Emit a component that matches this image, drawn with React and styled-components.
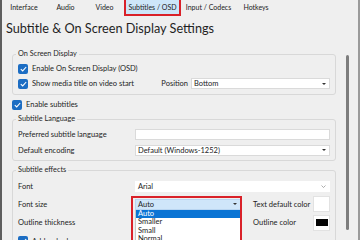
import React from "react";
import styled, { createGlobalStyle } from "styled-components";

const GlobalStyle = createGlobalStyle`
  html, body {
    margin: 0;
    padding: 0;
    width: 360px;
    height: 240px;
    overflow: hidden;
    background: #efefef;
  }
  body {
    font-family: Lato, "Noto Sans", sans-serif;
    color: #1d1d1d;
  }
`;

const Window = styled.div`
  width: 360px;
  height: 240px;
  box-sizing: border-box;
  border-left: 2px solid #5e5e5e;
  border-right: 2px solid #9a9a9a;
  background: #efefef;
  display: flex;
  flex-direction: column;
  overflow: hidden;
`;

const TabBar = styled.div`
  display: flex;
  height: 16px;
  flex-shrink: 0;
`;

const Tab = styled.div`
  width: ${(p) => p.$w}px;
  height: 16px;
  box-sizing: border-box;
  display: flex;
  justify-content: center;
  padding-top: 2px;
  font-size: 7px;
  line-height: 10px;
  white-space: nowrap;
  color: #222;
  background: ${(p) => (p.$active ? "#cde6f9" : "transparent")};
  border: ${(p) => (p.$active ? "2px solid #d92129" : "none")};
  border-top: none;
`;

const Title = styled.h1`
  margin: 3px 0 0 4px;
  font-size: 12.7px;
  line-height: 18px;
  font-weight: 400;
  color: #1f1f1f;
  white-space: nowrap;
`;

const Separator = styled.div`
  height: 1px;
  margin: 3px 4px 0 4px;
  background: #cdcdcd;
`;

const Body = styled.div`
  display: flex;
  padding-left: 10px;
  margin-top: 9px;
`;

const Content = styled.div`
  width: 324px;
  display: flex;
  flex-direction: column;
`;

const ScrollTrack = styled.div`
  margin-left: 10px;
  padding-top: 6px;
`;

const ScrollThumb = styled.div`
  width: 3px;
  height: 175px;
  border-radius: 2px;
  background: #7d7d7d;
`;

const Group = styled.fieldset`
  margin: ${(p) => p.$mt || 0}px 0 0 0;
  padding: 2px 5px ${(p) => p.$pb ?? 2}px 5px;
  border: 1px solid #d8d8d8;
  border-radius: 3px;
  min-width: 0;
`;

const Legend = styled.legend`
  margin-left: -2px;
  padding: 0 2px;
  font-size: 7.3px;
  line-height: 10px;
  color: #262626;
`;

const CheckRow = styled.div`
  display: flex;
  align-items: center;
  height: ${(p) => p.$h || 15}px;
  font-size: 7.5px;
  white-space: nowrap;
`;

const CheckBox = styled.span`
  width: 10px;
  height: 10px;
  margin-right: 4px;
  border-radius: 2px;
  background: #1c6dc3;
  display: inline-flex;
  align-items: center;
  justify-content: center;
  flex-shrink: 0;
`;

const SideLabel = styled.span`
  margin-left: auto;
  margin-right: 3px;
`;

const Grid = styled.div`
  display: grid;
  grid-template-columns: ${(p) => p.$cols};
  grid-template-rows: ${(p) => p.$rows};
  align-items: center;
  font-size: 7.5px;
  white-space: nowrap;
`;

const Field = styled.div`
  position: relative;
  height: 11px;
  box-sizing: border-box;
  grid-column: ${(p) => p.$span || "auto"};
  width: ${(p) => (p.$w ? p.$w + "px" : "auto")};
  background: ${(p) => p.$bg || "#fff"};
  border: 1px solid ${(p) => p.$border || "#dadada"};
  display: flex;
  align-items: center;
  justify-content: space-between;
  padding: 0 3px 0 2px;
  font-size: 7.5px;
  color: #1d1d1d;
`;

const Arrow = styled.span`
  width: 0;
  height: 0;
  border-left: 2px solid transparent;
  border-right: 2px solid transparent;
  border-top: 2px solid #333;
`;

const ColorLabel = styled.span`
  padding-left: 12px;
`;

const Swatch = styled.div`
  width: 17px;
  height: 16px;
  box-sizing: border-box;
  background: #fff;
  border: 1px solid #e2e2e2;
  display: flex;
  align-items: center;
  justify-content: center;
`;

const SwatchFill = styled.span`
  width: 12px;
  height: 7px;
  background: #050505;
`;

const ComboWrap = styled.div`
  position: relative;
  width: 106px;
  height: 11px;
`;

const Popup = styled.div`
  position: absolute;
  top: 11px;
  left: 0;
  width: 106px;
  box-sizing: border-box;
  background: #fff;
  border: 1px solid #c8c8c8;
  border-top: none;
  z-index: 2;
`;

const Option = styled.div`
  height: 8.5px;
  line-height: 8.5px;
  padding-left: 2px;
  font-size: 7.5px;
  background: ${(p) => (p.$sel ? "#0a74d4" : "transparent")};
  color: ${(p) => (p.$sel ? "#fff" : "#1d1d1d")};
`;

const Highlight = styled.div`
  position: absolute;
  top: -3px;
  left: -4px;
  width: 111px;
  height: 60px;
  box-sizing: border-box;
  border: 2px solid #d92129;
  z-index: 3;
  pointer-events: none;
`;

function Check() {
  return (
    <CheckBox>
      <svg width="7" height="6" viewBox="0 0 7 6">
        <path d="M0.8 3.1 L2.7 4.9 L6.2 1" fill="none" stroke="#fff" strokeWidth="1.1" />
      </svg>
    </CheckBox>
  );
}

function Chevron() {
  return (
    <svg width="5" height="3" viewBox="0 0 5 3">
      <path d="M0.5 0.5 L2.5 2.5 L4.5 0.5" fill="none" stroke="#8a8a8a" strokeWidth="0.7" />
    </svg>
  );
}

const tabs = [
  { label: "Interface", w: 44 },
  { label: "Audio", w: 39 },
  { label: "Video", w: 39 },
  { label: "Subtitles / OSD", w: 57, active: true },
  { label: "Input / Codecs", w: 55 },
  { label: "Hotkeys", w: 40 },
];

const sizes = ["Auto", "Smaller", "Small", "Normal", "Large", "Larger"];

export default function App() {
  return (
    <>
      <GlobalStyle />
      <Window>
        <TabBar>
          {tabs.map((t) => (
            <Tab key={t.label} $w={t.w} $active={t.active}>
              {t.label}
            </Tab>
          ))}
        </TabBar>
        <Title>Subtitle &amp; On Screen Display Settings</Title>
        <Separator />
        <Body>
          <Content>
            <Group $pb={3}>
              <Legend>On Screen Display</Legend>
              <CheckRow>
                <Check />
                Enable On Screen Display (OSD)
              </CheckRow>
              <CheckRow>
                <Check />
                Show media title on video start
                <SideLabel>Position</SideLabel>
                <Field $w={139}>
                  Bottom
                  <Arrow />
                </Field>
              </CheckRow>
            </Group>

            <CheckRow $h={19}>
              <Check />
              Enable subtitles
            </CheckRow>

            <Group>
              <Legend>Subtitle Language</Legend>
              <Grid $cols="117px minmax(0, 1fr)" $rows="16px 16px">
                <span>Preferred subtitle language</span>
                <Field />
                <span>Default encoding</span>
                <Field>
                  Default (Windows-1252)
                  <Arrow />
                </Field>
              </Grid>
            </Group>

            <Group $mt={4}>
              <Legend>Subtitle effects</Legend>
              <Grid $cols="117px 106px minmax(0, 1fr) 17px" $rows="18px 18px 19px 18px">
                <span>Font</span>
                <Field $span="2 / 5" $border="#ffffff">
                  Arial
                  <Chevron />
                </Field>
                <span>Font size</span>
                <ComboWrap>
                  <Field $bg="#cfe6fa" $border="#b9d6f2">
                    Auto
                    <Arrow />
                  </Field>
                  <Popup>
                    {sizes.map((s, i) => (
                      <Option key={s} $sel={i === 0}>
                        {s}
                      </Option>
                    ))}
                  </Popup>
                  <Highlight />
                </ComboWrap>
                <ColorLabel>Text default color</ColorLabel>
                <Swatch />
                <span>Outline thickness</span>
                <span />
                <ColorLabel>Outline color</ColorLabel>
                <Swatch>
                  <SwatchFill />
                </Swatch>
                <CheckRow $h={18}>
                  <Check />
                  Add a shadow
                </CheckRow>
              </Grid>
            </Group>
          </Content>
          <ScrollTrack>
            <ScrollThumb />
          </ScrollTrack>
        </Body>
      </Window>
    </>
  );
}
